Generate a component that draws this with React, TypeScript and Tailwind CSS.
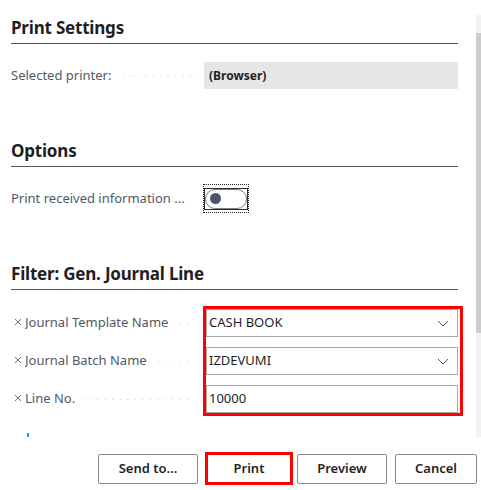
import { ReactNode } from "react"

function Heading({ title }: { title: string }) {
  return (
    <div className="pt-[15px] pb-[3px] border-b border-[#4f555c] text-[17px] leading-[25px] font-bold tracking-[-0.2px] text-[#1f1f1f]">
      {title}
    </div>
  )
}

function Leader() {
  return (
    <div className="flex-1 h-[1px] mx-[6px] bg-[linear-gradient(to_right,#c9c9c9_1px,transparent_1px)] bg-[length:7.5px_1px] bg-repeat-x bg-[position:right_center]" />
  )
}

function Cross() {
  return (
    <svg width="8" height="8" viewBox="0 0 8 8" fill="none" className="ml-[3px] mr-[3px] mb-[3px] shrink-0">
      <path d="M1 1l6 6M7 1l-6 6" stroke="#6b7582" strokeWidth="1" />
    </svg>
  )
}

function Label({ children, x }: { children: ReactNode; x?: boolean }) {
  return (
    <div className="flex items-center h-[28px] text-[13px] text-[#505a64] w-[192px] pr-[2px]">
      {x && <Cross />}
      <span className="whitespace-nowrap truncate">{children}</span>
      <Leader />
    </div>
  )
}

function Chevron() {
  return (
    <svg width="12" height="7" viewBox="0 0 12 7" fill="none" className="mr-[8px]">
      <path d="M1 1l5 5 5-5" stroke="#505a64" strokeWidth="1" />
    </svg>
  )
}

function Field({ value, dropdown }: { value: string; dropdown?: boolean }) {
  return (
    <div className="h-[28px] border border-[#a8a8a8] flex items-center justify-between pl-[2px] text-[13px] text-[#1f1f1f]">
      <span>{value}</span>
      {dropdown && <Chevron />}
    </div>
  )
}

export default function App() {
  const btn = "h-[30px] border border-[#8a8a8a] rounded-[2px] text-[13px] font-semibold text-[#1f1f1f] bg-white flex items-center justify-center"

  return (
    <div className="w-[481px] h-[490px] bg-white flex flex-col font-['Noto_Sans',sans-serif] overflow-hidden">
      <div className="h-[437px] flex">
        <div className="flex-1 pl-[11px] pr-[18px] overflow-hidden">
          <Heading title="Print Settings" />

          <div className="mt-[18px] flex items-center">
            <div className="flex items-center h-[27px] text-[13px] text-[#505a64] w-[193px]">
              <span className="whitespace-nowrap">Selected printer:</span>
              <Leader />
            </div>
            <div className="flex-1 h-[27px] bg-[#e6e6e6] flex items-center pl-[5px] text-[12px] font-bold text-[#1f1f1f]">
              (Browser)
            </div>
          </div>

          <div className="mt-[34px]">
            <Heading title="Options" />
          </div>

          <div className="mt-[17px] flex items-center h-[29px]">
            <div className="flex items-center text-[13px] text-[#505a64] w-[192px]">
              <span className="whitespace-nowrap">Print received information ...</span>
              <Leader />
            </div>
            <div className="w-[46px] h-[29px] border border-dotted border-[#222] flex items-center justify-center">
              <div className="w-[44px] h-[22px] border border-[#2b2b2b] flex">
                <div className="flex-1 rounded-full border border-[#7a8089] flex items-center pl-[4px]">
                  <div className="w-[11px] h-[11px] rounded-full bg-[#4b5567]" />
                </div>
              </div>
            </div>
          </div>

          <div className="mt-[33px]">
            <Heading title="Filter: Gen. Journal Line" />
          </div>

          <div className="mt-[16px] flex">
            <div className="shrink-0 flex flex-col gap-[10px] pt-[3px]">
              <Label x>Journal Template Name</Label>
              <Label x>Journal Batch Name</Label>
              <Label x>Line No.</Label>
            </div>
            <div className="shrink-0 w-[260px] border-[3px] border-[#ff0000] pr-[2px] flex flex-col gap-[10px]">
              <Field value="CASH BOOK" dropdown />
              <Field value="IZDEVUMI" dropdown />
              <Field value="10000" />
            </div>
          </div>

          <div className="mt-[17px] ml-[16px] w-[2px] h-[5px] bg-[#1fa3d6]" />
        </div>

        <div className="w-[5px] pt-[15px] flex flex-col">
          <div className="flex-1 bg-[#f2f2f2] pt-[18px]">
            <div className="h-[300px] bg-[#cdcdcd]" />
          </div>
        </div>
      </div>

      <div className="flex-1 flex items-start pt-[15px] pr-[4px]">
        <div className="ml-auto flex items-center">
          <button className={`${btn} w-[100px]`}>Send to...</button>
          <button className="ml-[7px] w-[88px] h-[33px] border-[3px] border-[#ff0000] text-[13px] font-semibold text-[#1f1f1f] bg-white flex items-center justify-center">
            Print
          </button>
          <button className={`${btn} ml-[4px] w-[90px]`}>Preview</button>
          <button className={`${btn} ml-[8px] w-[82px]`}>Cancel</button>
        </div>
      </div>
    </div>
  )
}
